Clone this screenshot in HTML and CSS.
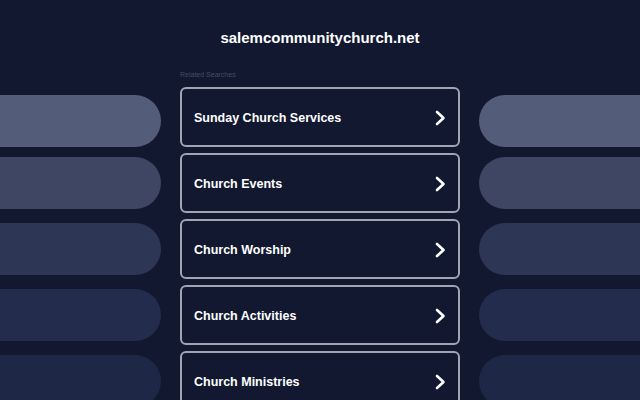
FILE: index.html
```html
<!DOCTYPE html>
<html>
<head>
<meta charset="utf-8">
<link rel="stylesheet" href="styles.css">
</head>
<body>
<header class="header">salemcommunitychurch.net</header>
<div class="layout">
  <div class="side side-left">
    <div class="pill p1"></div>
    <div class="pill p2"></div>
    <div class="pill p3"></div>
    <div class="pill p4"></div>
    <div class="pill p5"></div>
  </div>
  <div class="center">
    <div class="label">Related Searches</div>
    <a class="card" href="#"><span>Sunday Church Services</span><svg class="chev" viewBox="0 0 12 16" width="12" height="16"><path d="M3 2 L9.5 8 L3 14" fill="none" stroke="#fff" stroke-width="2.6" stroke-linecap="round" stroke-linejoin="round"/></svg></a>
    <a class="card" href="#"><span>Church Events</span><svg class="chev" viewBox="0 0 12 16" width="12" height="16"><path d="M3 2 L9.5 8 L3 14" fill="none" stroke="#fff" stroke-width="2.6" stroke-linecap="round" stroke-linejoin="round"/></svg></a>
    <a class="card" href="#"><span>Church Worship</span><svg class="chev" viewBox="0 0 12 16" width="12" height="16"><path d="M3 2 L9.5 8 L3 14" fill="none" stroke="#fff" stroke-width="2.6" stroke-linecap="round" stroke-linejoin="round"/></svg></a>
    <a class="card" href="#"><span>Church Activities</span><svg class="chev" viewBox="0 0 12 16" width="12" height="16"><path d="M3 2 L9.5 8 L3 14" fill="none" stroke="#fff" stroke-width="2.6" stroke-linecap="round" stroke-linejoin="round"/></svg></a>
    <a class="card" href="#"><span>Church Ministries</span><svg class="chev" viewBox="0 0 12 16" width="12" height="16"><path d="M3 2 L9.5 8 L3 14" fill="none" stroke="#fff" stroke-width="2.6" stroke-linecap="round" stroke-linejoin="round"/></svg></a>
  </div>
  <div class="side side-right">
    <div class="pill p1"></div>
    <div class="pill p2"></div>
    <div class="pill p3"></div>
    <div class="pill p4"></div>
    <div class="pill p5"></div>
  </div>
</div>
</body>
</html>
```
FILE: styles.css
```css
html, body {
  margin: 0;
  padding: 0;
  background: #111830;
  height: 400px;
  overflow: hidden;
  font-family: "Liberation Sans", Arial, sans-serif;
}
.header {
  padding-top: 28px;
  height: 20px;
  line-height: 20px;
  text-align: center;
  color: #ffffff;
  font-size: 15px;
  font-weight: bold;
}
.layout {
  display: grid;
  grid-template-columns: 161px 280px 161px;
  column-gap: 19px;
  margin-top: 22px;
}
.side {
  display: flex;
  flex-direction: column;
  gap: 14px;
  padding-top: 25px;
}
.pill {
  height: 52px;
  flex-shrink: 0;
}
.side .p1 { margin-bottom: -4px; }
.side-left .pill { border-radius: 0 26px 26px 0; }
.side-right .pill { border-radius: 26px 0 0 26px; }
.p1 { background: #535c79; }
.p2 { background: #3e4664; }
.p3 { background: #2e3656; }
.p4 { background: #242c4d; }
.p5 { background: #1f2747; }
.label {
  font-size: 7px;
  line-height: 10px;
  height: 10px;
  color: #464c66;
  margin-bottom: 7px;
}
.center {
  display: flex;
  flex-direction: column;
}
.card {
  box-sizing: border-box;
  height: 60px;
  margin-bottom: 6px;
  border: 2px solid #a1a5b3;
  border-radius: 6px;
  display: flex;
  align-items: center;
  justify-content: space-between;
  padding: 1px 12px 0 12px;
  text-decoration: none;
  color: #ffffff;
  font-size: 12.5px;
  font-weight: bold;
  background: #111830;
}
.chev { display: block; }
```
